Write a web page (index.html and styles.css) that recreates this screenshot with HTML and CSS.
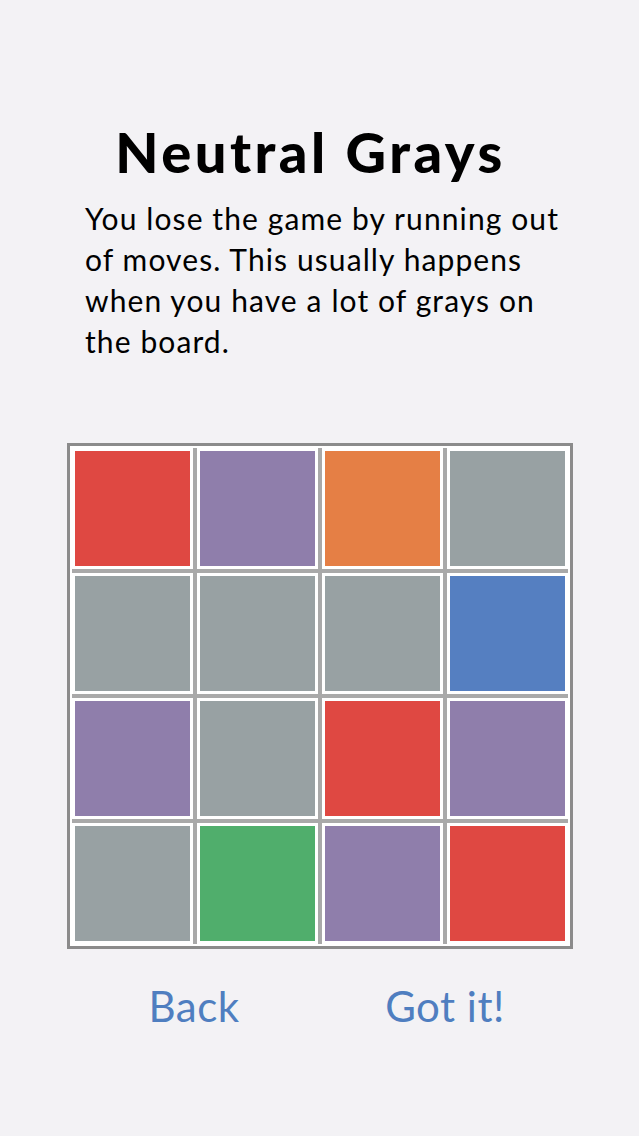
FILE: index.html
```html
<!DOCTYPE html>
<html lang="en">
<head>
<meta charset="utf-8">
<title>Neutral Grays</title>
<link rel="stylesheet" href="styles.css">
</head>
<body>
<main class="screen">
  <h1 class="title">Neutral Grays</h1>
  <p class="intro">You lose the game by running out of moves. This usually happens when you have a lot of grays on the board.</p>

  <div class="board">
    <div class="grid">
      <div class="cell"><span class="tile red"></span></div>
      <div class="cell"><span class="tile purple"></span></div>
      <div class="cell"><span class="tile orange"></span></div>
      <div class="cell"><span class="tile gray"></span></div>

      <div class="cell"><span class="tile gray"></span></div>
      <div class="cell"><span class="tile gray"></span></div>
      <div class="cell"><span class="tile gray"></span></div>
      <div class="cell"><span class="tile blue"></span></div>

      <div class="cell"><span class="tile purple"></span></div>
      <div class="cell"><span class="tile gray"></span></div>
      <div class="cell"><span class="tile red"></span></div>
      <div class="cell"><span class="tile purple"></span></div>

      <div class="cell"><span class="tile gray"></span></div>
      <div class="cell"><span class="tile green"></span></div>
      <div class="cell"><span class="tile purple"></span></div>
      <div class="cell"><span class="tile red"></span></div>
    </div>
  </div>

  <nav class="actions">
    <button class="action" type="button">Back</button>
    <button class="action" type="button">Got it!</button>
  </nav>
</main>
</body>
</html>
```

FILE: styles.css
```css
html, body {
  margin: 0;
  padding: 0;
  background: #f3f2f5;
}

.screen {
  width: 639px;
  height: 1136px;
  display: flex;
  flex-direction: column;
  align-items: center;
  font-family: Lato, "Open Sans", sans-serif;
  color: #000;
}

.title {
  margin: 120px 0 0 -18px;
  font-size: 56px;
  font-weight: 900;
  line-height: 64px;
  letter-spacing: 3.5px;
}

.intro {
  align-self: flex-start;
  width: 490px;
  margin: 14px 0 0 85px;
  font-size: 30px;
  line-height: 41px;
  font-weight: 400;
  letter-spacing: 1.1px;
}

.board {
  margin-top: 81px;
  width: 506px;
  box-sizing: border-box;
  border: 3px solid #8b8b8b;
  padding: 2px;
  background: #fff;
}

.grid {
  display: grid;
  grid-template-columns: repeat(4, 121px);
  grid-auto-rows: 121px;
  gap: 4px;
  background: #a9a9a9;
}

.cell {
  background: #fff;
  padding: 3px;
}

.tile {
  display: block;
  width: 115px;
  height: 115px;
}

.red { background: #df4842; }
.purple { background: #8f7eab; }
.orange { background: #e57f45; }
.gray { background: #98a1a3; }
.blue { background: #557fc1; }
.green { background: #50ae6c; }

.actions {
  display: flex;
  width: 502px;
  margin-top: 32px;
}

.action {
  flex: 1;
  border: 0;
  background: none;
  padding: 0;
  font-family: Lato, "Open Sans", sans-serif;
  font-size: 42px;
  line-height: 50px;
  letter-spacing: 0.5px;
  color: #4f7ec0;
}
```
